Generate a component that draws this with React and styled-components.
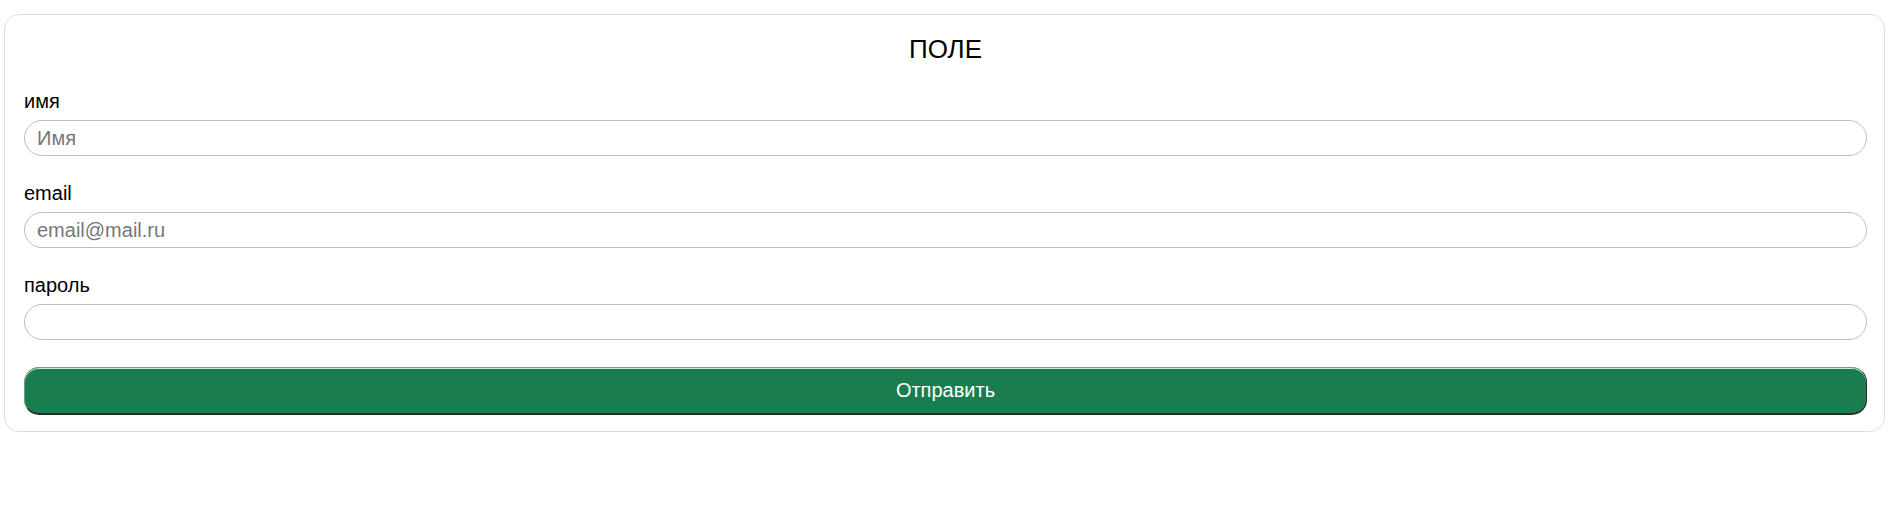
import React from 'react';
import styled, { createGlobalStyle } from 'styled-components';

const GlobalStyle = createGlobalStyle`
    body {
        margin: 0;
        background: #fff;
        font-family: "Liberation Sans", Arial, sans-serif;
    }
`;

const Card = styled.form`
    box-sizing: border-box;
    margin: 14px 14px 0 4px;
    padding: 20px 17px 16px 19px;
    border: 1px solid #dedede;
    border-radius: 15px;
    display: flex;
    flex-direction: column;
`;

const Title = styled.h2`
    margin: 0 0 26px;
    font-size: 26px;
    font-weight: 400;
    line-height: 29px;
    text-align: center;
    color: #000;
`;

const Field = styled.div`
    display: flex;
    flex-direction: column;
    margin-bottom: ${props => props.last ? '27px' : '26px'};
`;

const Label = styled.label`
    font-size: 20px;
    line-height: 23px;
    color: #000;
    margin-bottom: 7px;
`;

const Input = styled.input`
    box-sizing: border-box;
    width: 100%;
    height: 36px;
    padding: 0 12px;
    border: 1px solid #bdbdbd;
    border-radius: 18px;
    font-family: "Liberation Sans", Arial, sans-serif;
    font-size: 20px;
    color: #222;
    outline: 0;
    &::placeholder {
        color: #777;
    }
`;

const Submit = styled.button`
    box-sizing: border-box;
    width: 100%;
    height: 48px;
    border-style: solid;
    border-width: 1px 1px 2px 1px;
    border-color: #6f9c84 #2c2c2c #2c2c2c #6f9c84;
    border-radius: 15px;
    background-color: #1a7d4f;
    box-shadow: inset 0 1px 0 #cde8da;
    color: #fff;
    font-family: "Liberation Sans", Arial, sans-serif;
    font-size: 20px;
    cursor: pointer;
`;

export default function App() {
    return (
        <>
            <GlobalStyle />
            <Card onSubmit={e => e.preventDefault()}>
                <Title>ПОЛЕ</Title>
                <Field>
                    <Label>имя</Label>
                    <Input type="text" placeholder="Имя" />
                </Field>
                <Field>
                    <Label>email</Label>
                    <Input type="email" placeholder="email@mail.ru" />
                </Field>
                <Field last>
                    <Label>пароль</Label>
                    <Input type="password" />
                </Field>
                <Submit type="submit">Отправить</Submit>
            </Card>
        </>
    );
}
